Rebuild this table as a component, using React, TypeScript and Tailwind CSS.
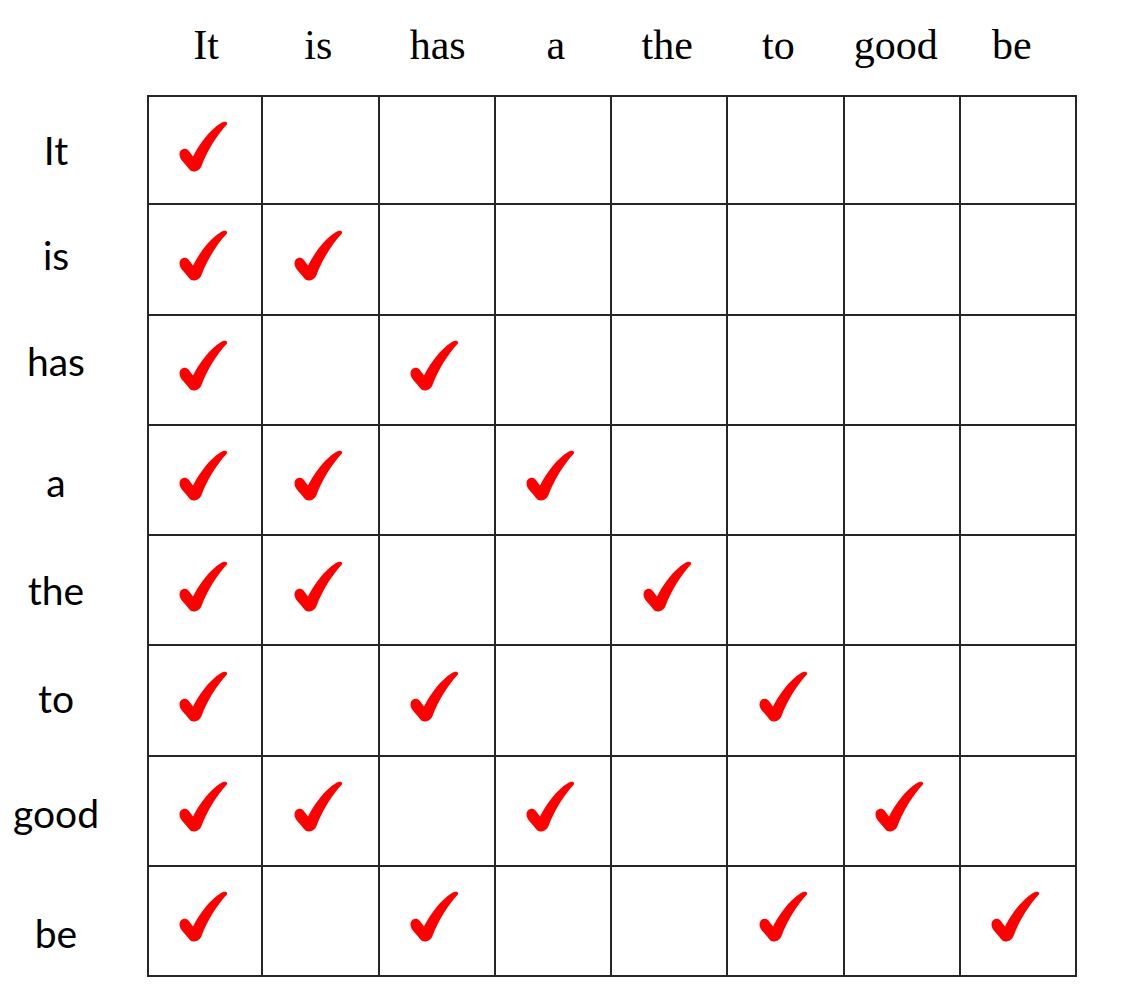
// header words with the small nudges the original layout has
const headers = [
  { w: "It", nudge: "translate-x-[1px]" },
  { w: "is", nudge: "-translate-x-[3px]" },
  { w: "has", nudge: "" },
  { w: "a", nudge: "translate-x-[2px]" },
  { w: "the", nudge: "-translate-x-[3px]" },
  { w: "to", nudge: "-translate-x-[8px]" },
  { w: "good", nudge: "-translate-x-[7px]" },
  { w: "be", nudge: "-translate-x-[7px]" },
];

// row labels, the tick columns (0-based) and a vertical nudge per label
const rows = [
  { label: "It", ticks: [0], nudge: "" },
  { label: "is", ticks: [0, 1], nudge: "-translate-y-[5px]" },
  { label: "has", ticks: [0, 2], nudge: "-translate-y-[9px]" },
  { label: "a", ticks: [0, 1, 3], nudge: "translate-y-[1px]" },
  { label: "the", ticks: [0, 1, 4], nudge: "-translate-y-[1px]" },
  { label: "to", ticks: [0, 2, 5], nudge: "-translate-y-[3px]" },
  { label: "good", ticks: [0, 1, 3, 6], nudge: "translate-y-[2px]" },
  { label: "be", ticks: [0, 2, 5, 7], nudge: "translate-y-[11px]" },
];

function Tick() {
  return (
    <svg width="49" height="53" viewBox="0 0 49 53" className="-translate-x-[2px] -translate-y-[4px]">
      <path
        d="M0.5 34.5 C0.5 29 6.5 27 9.5 30.5 L14 36.5 C20.5 24 30 10.5 42 3 C46 0.5 49.5 2 47.5 5 C38.5 14.5 28.5 30 22.5 46 C20.5 51.5 13 53.5 10 49 C7 44 0.5 40 0.5 34.5 Z"
        fill="#ff0000"
      />
    </svg>
  );
}

export default function App() {
  return (
    <main className="min-h-screen w-full bg-white">
      <div className="grid grid-cols-[147px_repeat(8,116.25px)] grid-rows-[95px_repeat(8,110.25px)]">
        {/* header row */}
        <div />
        {headers.map((h) => (
          <div
            key={h.w}
            className={`pt-[24px] text-center text-[42px] leading-[42px] text-black font-['Liberation_Serif','Times_New_Roman',serif] ${h.nudge}`}
          >
            {h.w}
          </div>
        ))}

        {/* body rows */}
        {rows.map((row, r) => (
          <Row key={row.label} label={row.label} ticks={row.ticks} nudge={row.nudge} r={r} />
        ))}
      </div>
    </main>
  );
}

function Row({ label, ticks, nudge, r }: { label: string; ticks: number[]; nudge: string; r: number }) {
  return (
    <>
      <div className="flex items-center justify-center pr-[35px] text-[39px] text-black font-['Lato','Carlito',sans-serif]">
        <span className={nudge}>{label}</span>
      </div>
      {headers.map((_, c) => (
        <div
          key={c}
          className={`flex items-center justify-center border-r-2 border-b-2 border-[#262626] ${
            c === 0 ? "border-l-2" : ""
          } ${r === 0 ? "border-t-2" : ""}`}
        >
          {ticks.includes(c) && <Tick />}
        </div>
      ))}
    </>
  );
}
